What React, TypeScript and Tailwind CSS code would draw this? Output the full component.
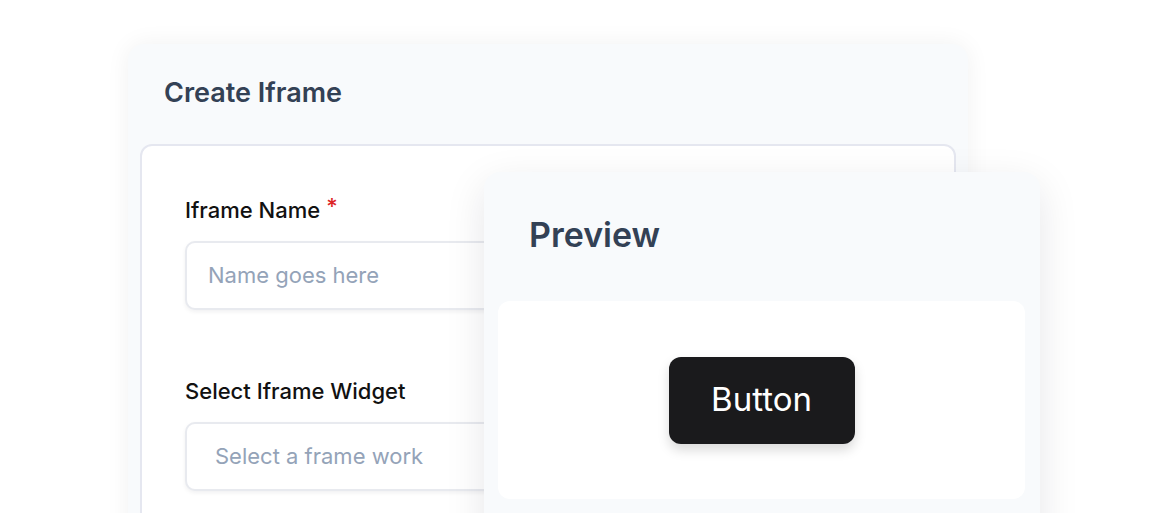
import React from "react";

function Field({
  label,
  placeholder,
  required,
  indent,
}: {
  label: string;
  placeholder: string;
  required?: boolean;
  indent: string;
}) {
  return (
    <div className="flex flex-col">
      <label className="flex items-start gap-[6px] text-[22px] font-medium leading-7 text-[#111111]">
        {label}
        {required && <span className="text-[22px] leading-5 text-[#dc2626]">*</span>}
      </label>
      <div
        className={`mt-[17px] flex h-[69px] items-center rounded-[10px] border-2 border-[#e8eaef] bg-white shadow-[0_2px_4px_rgba(15,23,42,0.06)] ${indent}`}
      >
        <span className="text-[22px] text-[#94a3b8]">{placeholder}</span>
      </div>
    </div>
  );
}

export default function App() {
  return (
    <div className="relative h-[513px] w-[1168px] overflow-hidden bg-white font-['Inter',sans-serif]">
      {/* back card */}
      <div className="ml-[128px] mt-[44px] w-[840px] rounded-2xl bg-[#f8fafc] pb-10 shadow-[0_0_24px_rgba(15,23,42,0.06)]">
        <h2 className="px-9 pt-[33px] text-[27px] font-semibold leading-8 text-[#334155]">Create Iframe</h2>
        <div className="mx-3 mt-[35px] rounded-xl border-2 border-[#e5e7f0] bg-white pb-20 pl-[43px] pr-11 pt-[50px]">
          <Field label="Iframe Name" placeholder="Name goes here" required indent="pl-[21px]" />
          <div className="h-[67px]" />
          <Field label="Select Iframe Widget" placeholder="Select a frame work" indent="pl-[28px]" />
        </div>
      </div>

      {/* preview window */}
      <div className="absolute left-[484px] top-[172px] flex h-[370px] w-[556px] flex-col rounded-2xl bg-[#f8fafc] px-[14px] shadow-[0_12px_40px_rgba(15,23,42,0.10)]">
        <h2 className="pl-[31px] pt-[43px] text-[34px] font-semibold leading-10 text-[#334155]">Preview</h2>
        <div className="mt-[46px] flex h-[198px] w-[527px] items-center justify-center rounded-xl bg-white">
          <button className="flex h-[87px] w-[186px] items-center justify-center rounded-xl bg-[#1a1a1c] text-[33px] text-white shadow-[0_6px_12px_rgba(0,0,0,0.15)]">
            Button
          </button>
        </div>
      </div>
    </div>
  );
}
